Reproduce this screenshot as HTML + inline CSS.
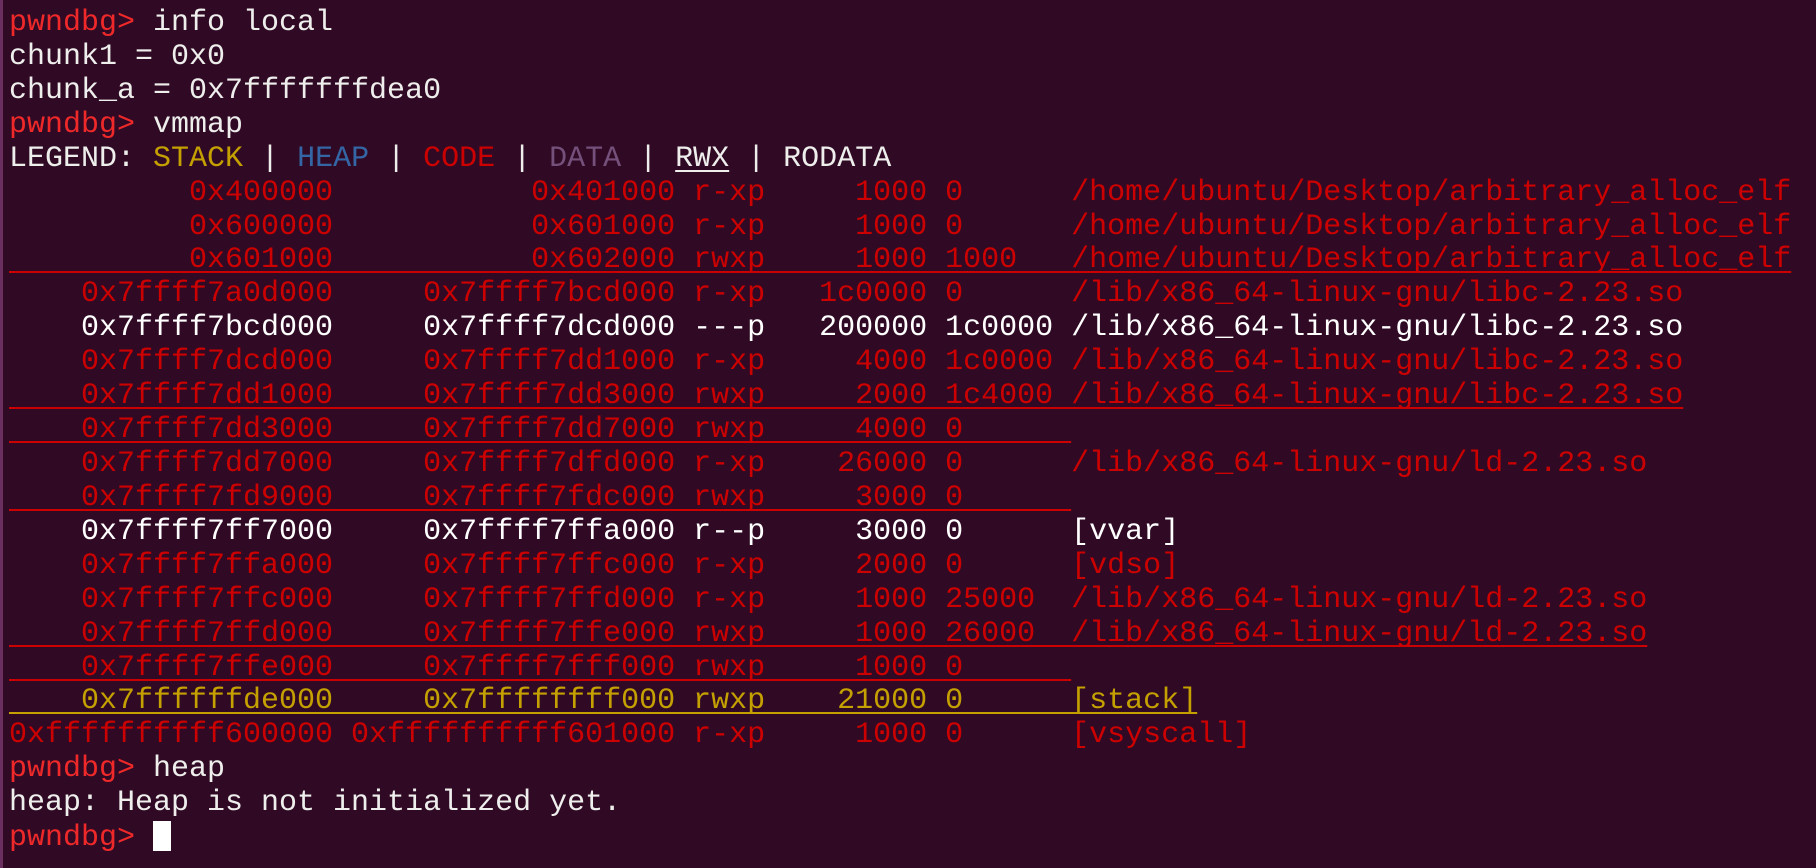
<!DOCTYPE html>
<html><head><meta charset="utf-8"><style>
html,body{margin:0;padding:0;background:#300a24;width:1816px;height:868px;overflow:hidden}
body{border-left:3px solid #6b2f5f;box-sizing:border-box}
pre{margin:0;padding:7px 0 0 6px;font-family:"Liberation Mono",monospace;font-size:30px;line-height:33.92px;color:#eeeeec;white-space:pre}
.p{color:#ef2929}.r{color:#cc0000}.y{color:#c4a000}.b{color:#3465a4}.m{color:#75507b}.w{color:#ffffff}
.u{text-decoration:underline;text-decoration-thickness:2px;text-underline-offset:4px;text-decoration-skip-ink:none}
.cur{display:inline-block;width:18px;height:30px;background:#fff;vertical-align:-6px}
</style></head><body><pre><span class="p">pwndbg&gt;</span> info local
chunk1 = 0x0
chunk_a = 0x7fffffffdea0
<span class="p">pwndbg&gt;</span> vmmap
LEGEND: <span class="y">STACK</span> | <span class="b">HEAP</span> | <span class="r">CODE</span> | <span class="m">DATA</span> | <span class="u">RWX</span> | RODATA
<span class="r">          0x400000           0x401000 r-xp     1000 0      /home/ubuntu/Desktop/arbitrary_alloc_elf</span>
<span class="r">          0x600000           0x601000 r-xp     1000 0      /home/ubuntu/Desktop/arbitrary_alloc_elf</span>
<span class="r u">          0x601000           0x602000 rwxp     1000 1000   /home/ubuntu/Desktop/arbitrary_alloc_elf</span>
<span class="r">    0x7ffff7a0d000     0x7ffff7bcd000 r-xp   1c0000 0      /lib/x86_64-linux-gnu/libc-2.23.so</span>
<span class="w">    0x7ffff7bcd000     0x7ffff7dcd000 ---p   200000 1c0000 /lib/x86_64-linux-gnu/libc-2.23.so</span>
<span class="r">    0x7ffff7dcd000     0x7ffff7dd1000 r-xp     4000 1c0000 /lib/x86_64-linux-gnu/libc-2.23.so</span>
<span class="r u">    0x7ffff7dd1000     0x7ffff7dd3000 rwxp     2000 1c4000 /lib/x86_64-linux-gnu/libc-2.23.so</span>
<span class="r u">    0x7ffff7dd3000     0x7ffff7dd7000 rwxp     4000 0      </span>
<span class="r">    0x7ffff7dd7000     0x7ffff7dfd000 r-xp    26000 0      /lib/x86_64-linux-gnu/ld-2.23.so</span>
<span class="r u">    0x7ffff7fd9000     0x7ffff7fdc000 rwxp     3000 0      </span>
<span class="w">    0x7ffff7ff7000     0x7ffff7ffa000 r--p     3000 0      [vvar]</span>
<span class="r">    0x7ffff7ffa000     0x7ffff7ffc000 r-xp     2000 0      [vdso]</span>
<span class="r">    0x7ffff7ffc000     0x7ffff7ffd000 r-xp     1000 25000  /lib/x86_64-linux-gnu/ld-2.23.so</span>
<span class="r u">    0x7ffff7ffd000     0x7ffff7ffe000 rwxp     1000 26000  /lib/x86_64-linux-gnu/ld-2.23.so</span>
<span class="r u">    0x7ffff7ffe000     0x7ffff7fff000 rwxp     1000 0      </span>
<span class="y u">    0x7ffffffde000     0x7ffffffff000 rwxp    21000 0      [stack]</span>
<span class="r">0xffffffffff600000 0xffffffffff601000 r-xp     1000 0      [vsyscall]</span>
<span class="p">pwndbg&gt;</span> heap
heap: Heap is not initialized yet.
<span class="p">pwndbg&gt;</span> <span class="cur"></span></pre></body></html>
